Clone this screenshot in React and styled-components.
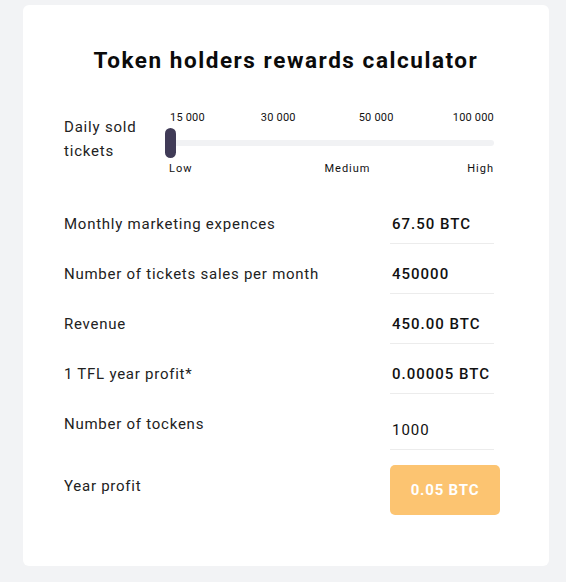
import React, { useState } from 'react'
import styled, { createGlobalStyle } from 'styled-components'

const GlobalStyle = createGlobalStyle`
  html, body {
    margin: 0;
    padding: 0;
    background: #f2f3f5;
  }
  body {
    font-family: 'Roboto', 'Liberation Sans', sans-serif;
    color: #111;
  }
`

const Page = styled.div`
  width: 566px;
  height: 582px;
  padding: 5px 17px 16px 23px;
  box-sizing: border-box;
`

const Card = styled.div`
  background: #fff;
  border-radius: 6px;
  height: 100%;
  box-sizing: border-box;
  padding: 42px 55px 0 41px;
`

const Title = styled.h1`
  margin: 0 -14px 38px 0;
  text-align: center;
  font-size: 22.5px;
  font-weight: 700;
  letter-spacing: 1.55px;
  color: #0b0b0b;
`

const SliderRow = styled.div`
  display: flex;
  align-items: flex-start;
  margin-bottom: 39px;
`

const SliderLabel = styled.div`
  width: 101px;
  font-size: 15px;
  line-height: 24px;
  letter-spacing: 0.8px;
  padding-top: 4px;
  color: #222;
`

const Slider = styled.div`
  flex: 1;
  display: flex;
  flex-direction: column;
`

const Scale = styled.div`
  display: flex;
  font-size: 11px;
  letter-spacing: 0.2px;
  color: #111;
  height: 14px;
  line-height: 14px;
`

const Tick = styled.span`
  margin-left: ${p => (p.$end ? 'auto' : `${p.$ml || 0}px`)};
  white-space: nowrap;
`

const Track = styled.div`
  position: relative;
  height: 30px;
  display: flex;
  align-items: center;
  margin-top: 3px;
`

const Rail = styled.div`
  flex: 1;
  height: 6px;
  border-radius: 3px;
  background: #f1f2f4;
`

const Thumb = styled.div`
  position: absolute;
  left: 0;
  top: 0;
  width: 11px;
  height: 30px;
  border-radius: 6px;
  background: #403b57;
`

const Levels = styled.div`
  display: flex;
  font-size: 11px;
  letter-spacing: 1px;
  margin-top: 4px;
  color: #111;
`

const Level = styled.span`
  margin-left: ${p => (p.$end ? 'auto' : `${p.$ml || 0}px`)};
`

const Rows = styled.div`
  display: flex;
  flex-direction: column;
`

const Row = styled.div`
  display: flex;
  justify-content: space-between;
  align-items: flex-start;
  height: 50px;
`

const Label = styled.div`
  font-size: 15px;
  letter-spacing: 0.75px;
  line-height: 20px;
  color: #222;
`

const Value = styled.div`
  width: 104px;
  border-bottom: 1px solid #ececec;
  font-size: 15px;
  line-height: 20px;
  letter-spacing: 1px;
  font-weight: ${p => (p.$light ? 400 : 500)};
  padding-top: ${p => (p.$light ? 6 : 0)}px;
  box-sizing: border-box;
  height: ${p => (p.$light ? 36 : 30)}px;
  padding-left: 2px;
  color: #111;
`

const ProfitRow = styled.div`
  display: flex;
  justify-content: space-between;
  align-items: flex-start;
  margin-top: 1px;
  margin-right: -6px;
`

const ProfitLabel = styled(Label)`
  padding-top: 11px;
`

const ProfitButton = styled.button`
  width: 110px;
  height: 50px;
  border: none;
  border-radius: 5px;
  background: #fcc471;
  color: #fff;
  font-family: inherit;
  font-size: 15px;
  font-weight: 700;
  letter-spacing: 0.8px;
  cursor: pointer;
`

const rows = [
  { label: 'Monthly marketing expences', value: '67.50 BTC' },
  { label: 'Number of tickets sales per month', value: '450000' },
  { label: 'Revenue', value: '450.00 BTC' },
  { label: '1 TFL year profit*', value: '0.00005 BTC' },
  { label: 'Number of tockens', value: '1000', light: true },
]

export default function App() {
  const [profit] = useState('0.05 BTC')
  return (
    <Page>
      <GlobalStyle />
      <Card>
        <Title>Token holders rewards calculator</Title>
        <SliderRow>
          <SliderLabel>
            Daily sold
            <br />
            tickets
          </SliderLabel>
          <Slider>
            <Scale>
              <Tick $ml={5}>15 000</Tick>
              <Tick $ml={56}>30 000</Tick>
              <Tick $ml={63}>50 000</Tick>
              <Tick $end>100 000</Tick>
            </Scale>
            <Track>
              <Rail />
              <Thumb />
            </Track>
            <Levels>
              <Level $ml={4}>Low</Level>
              <Level $ml={132}>Medium</Level>
              <Level $end>High</Level>
            </Levels>
          </Slider>
        </SliderRow>
        <Rows>
          {rows.map(r => (
            <Row key={r.label}>
              <Label>{r.label}</Label>
              <Value $light={r.light}>{r.value}</Value>
            </Row>
          ))}
        </Rows>
        <ProfitRow>
          <ProfitLabel>Year profit</ProfitLabel>
          <ProfitButton>{profit}</ProfitButton>
        </ProfitRow>
      </Card>
    </Page>
  )
}
